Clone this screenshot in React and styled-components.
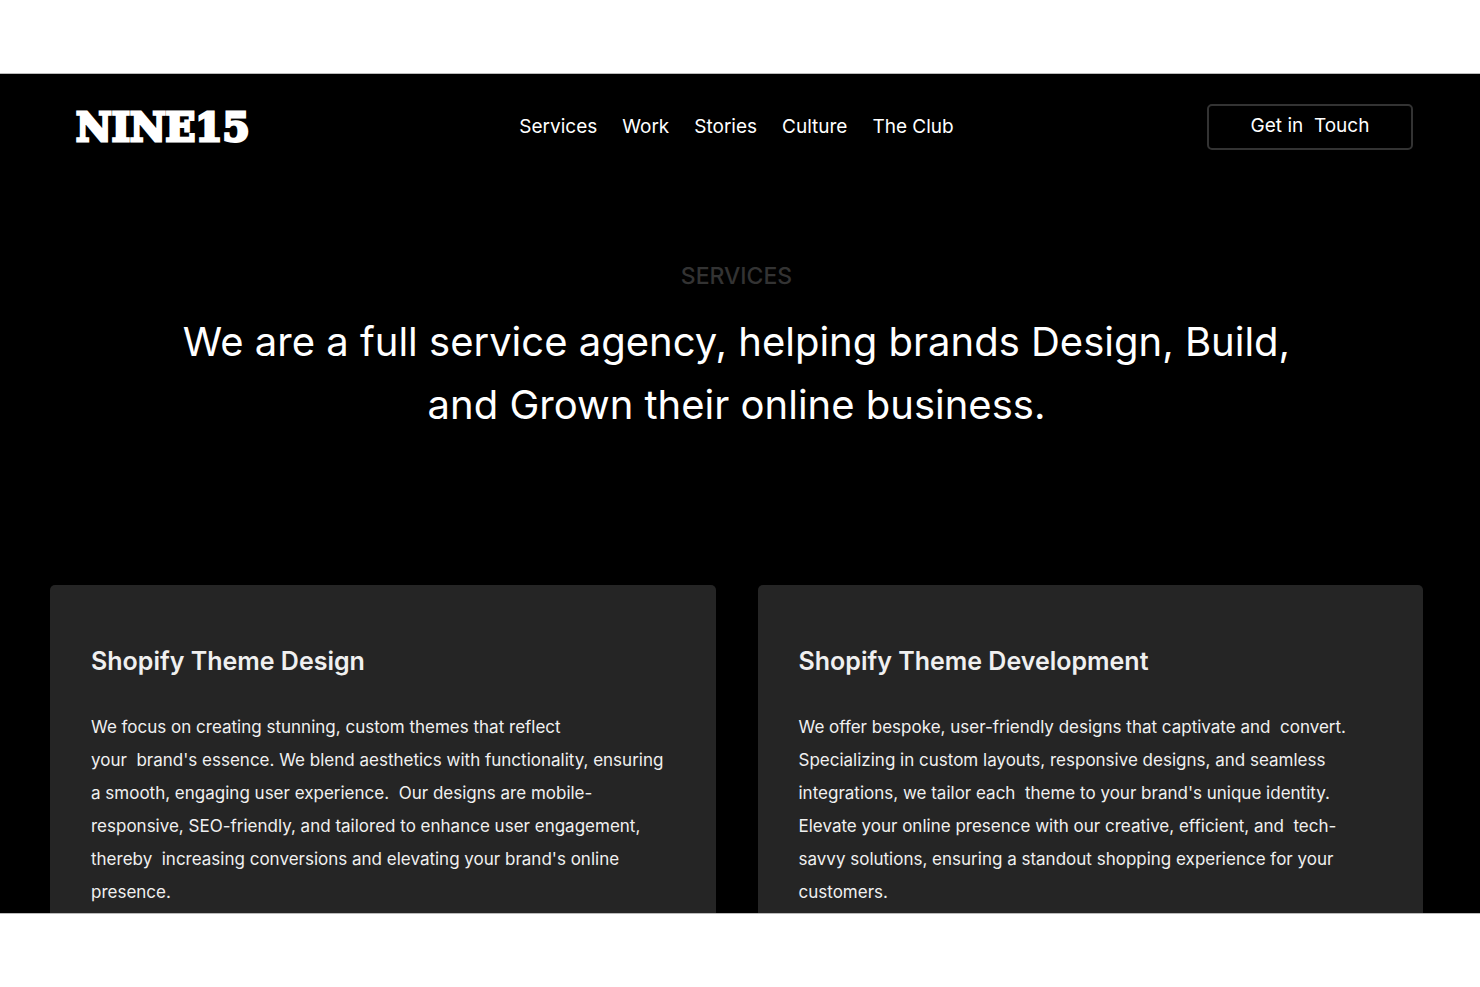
import React from 'react';
import styled, { createGlobalStyle } from 'styled-components';

const links = ['Services', 'Work', 'Stories', 'Culture', 'The Club'];

const services = [
    {
        title: 'Shopify Theme Design',
        lines: [
            'We focus on creating stunning, custom themes that reflect',
            "your  brand's essence. We blend aesthetics with functionality, ensuring",
            'a smooth, engaging user experience.  Our designs are mobile-',
            'responsive, SEO-friendly, and tailored to enhance user engagement,',
            "thereby  increasing conversions and elevating your brand's online",
            'presence.',
        ],
    },
    {
        title: 'Shopify Theme Development',
        lines: [
            'We offer bespoke, user-friendly designs that captivate and  convert.',
            'Specializing in custom layouts, responsive designs, and seamless',
            "integrations, we tailor each  theme to your brand's unique identity.",
            'Elevate your online presence with our creative, efficient, and  tech-',
            'savvy solutions, ensuring a standout shopping experience for your',
            'customers.',
        ],
    },
];

const App = () => {
    return (
        <Page>
            <GlobalStyle />
            <Main>
                <Header>
                    <Logo href="#">NINE15</Logo>
                    <Nav>
                        {links.map((link) => (
                            <NavLink href="#" key={link}>{link}</NavLink>
                        ))}
                    </Nav>
                    <ContactButton type="button">{'Get in  Touch'}</ContactButton>
                </Header>
                <Intro>
                    <Eyebrow>SERVICES</Eyebrow>
                    <Headline>
                        {'We are a full service agency, helping brands Design, Build,\nand Grown their online business.'}
                    </Headline>
                </Intro>
                <Cards>
                    {services.map(({ title, lines }) => (
                        <Card key={title}>
                            <CardTitle>{title}</CardTitle>
                            <CardText>{lines.join('\n')}</CardText>
                        </Card>
                    ))}
                </Cards>
            </Main>
        </Page>
    );
};

export default App;

const GlobalStyle = createGlobalStyle`
    * {
        box-sizing: border-box;
    }

    body {
        margin: 0;
        background: #fff;
        font-family: Inter, 'Liberation Sans', sans-serif;
    }
`;

const Page = styled.div`
    padding: 73px 0;
`;

const Main = styled.main`
    background: #000;
    color: #fff;
    border-top: 1px solid #bbb;
    border-bottom: 1px solid #bbb;
`;

const Header = styled.header`
    display: grid;
    grid-template-columns: 1fr auto 1fr;
    align-items: center;
    padding: 30px 67px 0 60px;
`;

const Logo = styled.a`
    justify-self: start;
    margin-left: 16px;
    color: #fff;
    font-family: 'DejaVu Serif', serif;
    font-size: 39px;
    font-weight: 700;
    line-height: 46px;
    text-decoration: none;
    -webkit-text-stroke: 3px #fff;
`;

const Nav = styled.nav`
    display: flex;
    gap: 25px;
`;

const NavLink = styled.a`
    color: #fff;
    font-size: 19px;
    line-height: 24px;
    text-decoration: none;
`;

const ContactButton = styled.button`
    justify-self: end;
    width: 206px;
    height: 46px;
    padding: 0 0 3px;
    border: 2px solid #333;
    border-radius: 5px;
    background: transparent;
    color: #fff;
    font-family: inherit;
    font-size: 19px;
    white-space: pre;
`;

const Intro = styled.section`
    padding: 110px 57px 0 50px;
    text-align: center;
`;

const Eyebrow = styled.p`
    margin: 0;
    color: #333;
    font-size: 23px;
    font-weight: 500;
    line-height: 32px;
`;

const Headline = styled.h1`
    margin: 18px 0 0;
    font-size: 40px;
    font-weight: 400;
    line-height: 63px;
    white-space: pre-line;
`;

const Cards = styled.section`
    display: grid;
    grid-template-columns: 1fr 1fr;
    gap: 42px;
    padding: 149px 57px 0 50px;
`;

const Card = styled.article`
    padding: 60px 41px 4px;
    border-radius: 5px 5px 0 0;
    background: #252525;
    color: #f0f0f0;
`;

const CardTitle = styled.h2`
    margin: 0;
    font-size: 25px;
    font-weight: 600;
    line-height: 32px;
`;

const CardText = styled.p`
    margin: 34px 0 0;
    font-size: 17px;
    line-height: 33px;
    white-space: pre-wrap;
`;
